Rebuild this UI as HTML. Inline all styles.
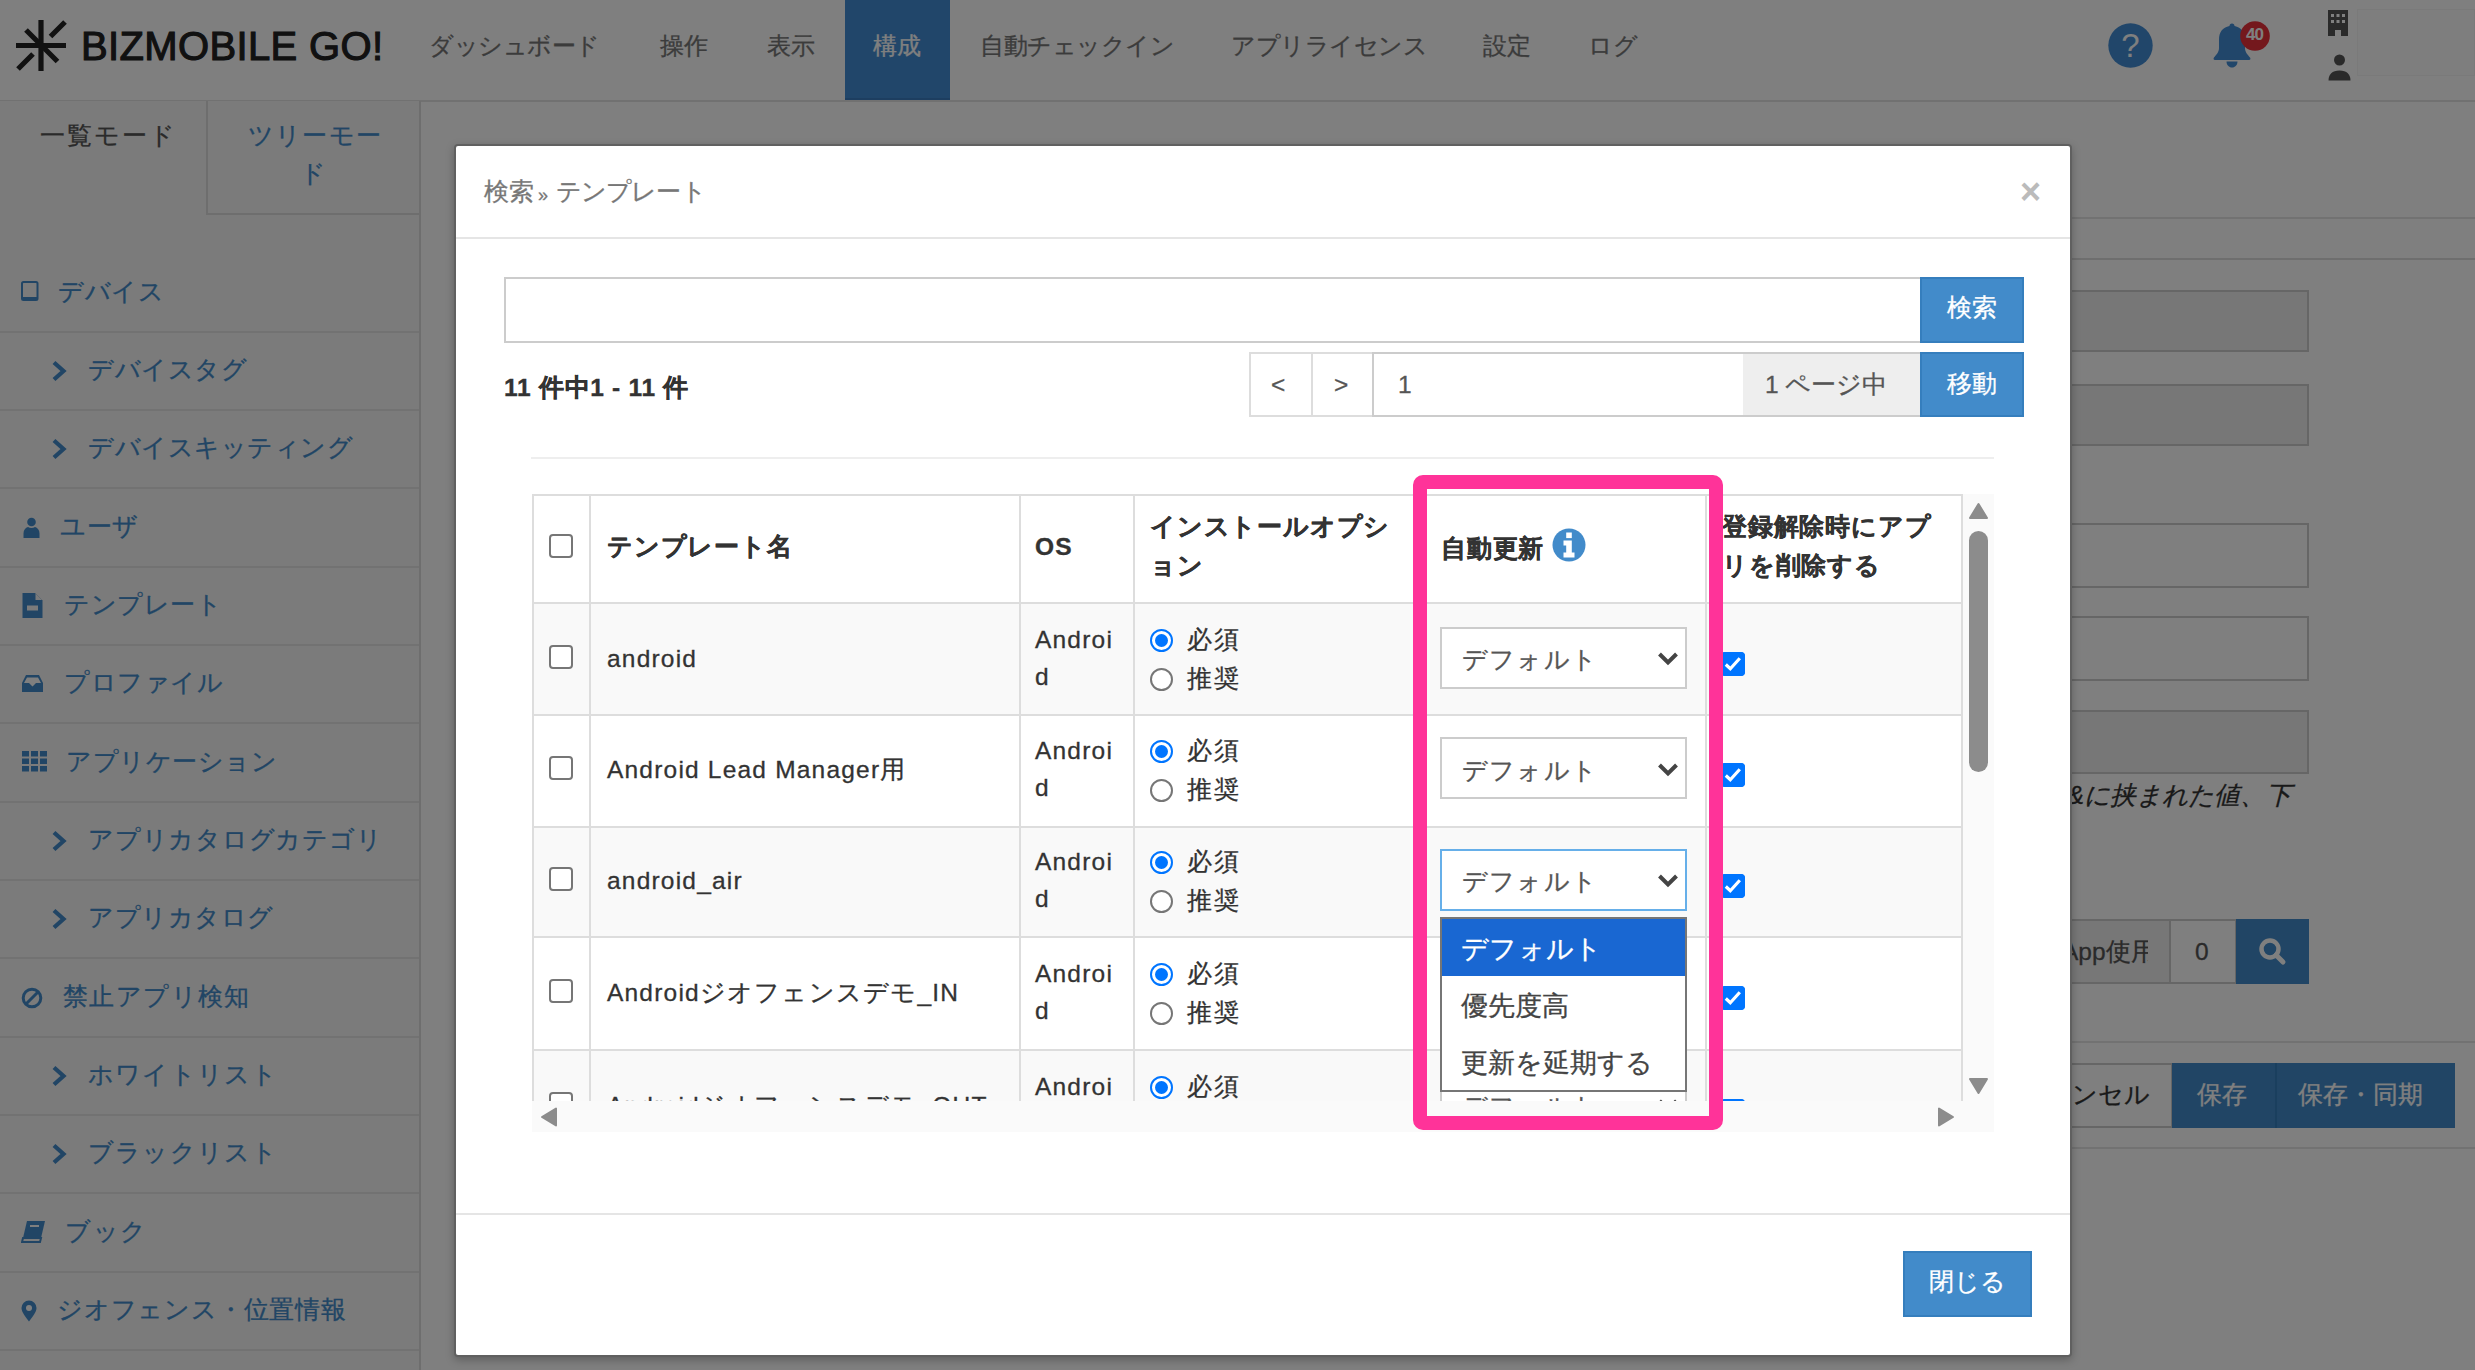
<!DOCTYPE html>
<html lang="ja"><head><meta charset="utf-8">
<style>
*{box-sizing:border-box;margin:0;padding:0}
html,body{width:2475px;height:1370px;overflow:hidden;background:#fff;font-family:"Liberation Sans",sans-serif;font-size:24.5px;color:#333}
.t,.st,.nt,.btn{-webkit-text-stroke:0.3px currentColor}
.a{position:absolute;white-space:nowrap}
.nt{position:absolute;top:27px;height:38px;line-height:38px;color:#777;font-size:23.5px}
.st{position:absolute;color:#428bca;line-height:38px;height:38px;font-size:24.5px;letter-spacing:0.5px}
.sep{position:absolute;left:0;width:419px;height:2px;background:#e4e4e4}
.hl{position:absolute;height:2px;background:#ddd}
.vl{position:absolute;width:2px;background:#ddd}
.t{position:absolute;white-space:nowrap;line-height:38px;height:38px;color:#333;font-size:24.5px}
.b{font-weight:bold;-webkit-text-stroke:0.35px #333;letter-spacing:0.8px}
.cb{position:absolute;width:24px;height:24px;border:2px solid #767676;border-radius:4px;background:#fff}
.cbc{position:absolute;width:24px;height:24px;border-radius:4px;background:#0075ff}
.rd{position:absolute;width:23px;height:23px;border-radius:50%;border:2px solid #767676;background:#fff}
.rdc{position:absolute;width:23px;height:23px;border-radius:50%;border:2px solid #0075ff;background:#fff}
.rdc:after{content:"";position:absolute;left:3px;top:3px;width:13px;height:13px;border-radius:50%;background:#0075ff}
.sel{position:absolute;width:247px;height:62px;border:2px solid #ccc;background:#fff}
.btn{position:absolute;background:#428bca;color:#fff;text-align:center;font-size:24.5px}
</style></head><body>

<div class="a" style="left:0;top:0;width:2475px;height:1370px;background:#fff">
<div class="a" style="left:0;top:100px;width:2475px;height:2px;background:#e3e3e3"></div>
<svg class="a" style="left:14px;top:18px" width="56" height="56" viewBox="0 0 56 56">
<g stroke="#222" stroke-width="5.2" fill="none">
<line x1="27" y1="2" x2="27" y2="53"/>
<line x1="2" y1="27.5" x2="52" y2="27.5"/>
<line x1="12" y1="12" x2="43.5" y2="43.5"/>
<line x1="36.5" y1="18.5" x2="51" y2="4"/>
<line x1="4" y1="51" x2="19" y2="36"/>
</g></svg>
<div class="a" style="left:81px;top:23px;font-size:40px;font-weight:normal;color:#222;line-height:46px;letter-spacing:0.35px;-webkit-text-stroke:1.1px #222">BIZMOBILE GO!</div>
<div class="a" style="left:845px;top:0;width:105px;height:100px;background:#428cd4;border-bottom:2px solid #3a7cc0"></div>
<div class="nt" style="left:429px;color:#777;letter-spacing:-0.5px">ダッシュボード</div>
<div class="nt" style="left:660px;color:#777;letter-spacing:0">操作</div>
<div class="nt" style="left:767px;color:#777;letter-spacing:0">表示</div>
<div class="nt" style="left:873px;color:#fff;letter-spacing:0">構成</div>
<div class="nt" style="left:980px;color:#777;letter-spacing:-0.5px">自動チェックイン</div>
<div class="nt" style="left:1231px;color:#777;letter-spacing:-0.5px">アプリライセンス</div>
<div class="nt" style="left:1483px;color:#777;letter-spacing:0">設定</div>
<div class="nt" style="left:1588px;color:#777;letter-spacing:0">ログ</div>
<svg class="a" style="left:2108px;top:23px" width="45" height="45" viewBox="0 0 45 45">
<circle cx="22.5" cy="22.5" r="22.2" fill="#428cd4"/>
<text x="22.5" y="34" text-anchor="middle" font-family="Liberation Sans" font-size="33" fill="#fff">?</text></svg>
<svg class="a" style="left:2210px;top:22px" width="44" height="46" viewBox="0 0 44 46">
<path d="M22 1.5c1.6 0 2.5 1 2.5 2.5c7 1.2 10.5 6.5 10.5 13.5v8.5c0 4 2.5 6.5 5 9.5c.8 1 .5 2.5-1 2.5H5c-1.5 0-1.8-1.5-1-2.5c2.5-3 5-5.5 5-9.5v-8.5c0-7 3.5-12.3 10.5-13.5c0-1.5.9-2.5 2.5-2.5z" fill="#428cd4"/>
<path d="M16.5 39.5h11c0 3.5-2.5 6-5.5 6s-5.5-2.5-5.5-6z" fill="#428cd4"/></svg>
<svg class="a" style="left:2238px;top:19px" width="34" height="34" viewBox="0 0 34 34">
<circle cx="17" cy="17" r="14.8" fill="#e8303a"/>
<text x="16.5" y="21" text-anchor="middle" font-family="Liberation Sans" font-size="17" font-weight="bold" fill="#fff" letter-spacing="-1">40</text></svg>
<svg class="a" style="left:2328px;top:10px" width="21" height="27" viewBox="0 0 21 27">
<path d="M0 0h20v26h-7v-6h-6v6H0z" fill="#555"/>
<g fill="#fff"><rect x="3" y="4" width="3" height="3"/><rect x="8.5" y="4" width="3" height="3"/><rect x="14" y="4" width="3" height="3"/>
<rect x="3" y="10" width="3" height="3"/><rect x="8.5" y="10" width="3" height="3"/><rect x="14" y="10" width="3" height="3"/></g></svg>
<svg class="a" style="left:2328px;top:54px" width="24" height="28" viewBox="0 0 24 28">
<circle cx="11.5" cy="6" r="5.5" fill="#555"/>
<path d="M0.5 26.5c0-6 3.5-10 11-10S22.5 20.5 22.5 26.5z" fill="#555"/></svg>
<div class="a" style="left:2357px;top:9px;width:118px;height:67px;background:#fdfdfd;border:1px solid #f5f5f5"></div>
<div class="a" style="left:0;top:101px;width:419px;height:1269px;background:#f6f6f6"></div>
<div class="a" style="left:419px;top:101px;width:2px;height:1269px;background:#ddd"></div>
<div class="a" style="left:206px;top:101px;width:2px;height:114px;background:#ddd"></div>
<div class="a" style="left:206px;top:213px;width:213px;height:2px;background:#ddd"></div>
<div class="t" style="left:40px;top:117px;color:#555;letter-spacing:2px">一覧モード</div>
<div class="t" style="left:248px;top:117px;color:#428bca;letter-spacing:1.2px">ツリーモー</div>
<div class="t" style="left:300px;top:155px;color:#428bca">ド</div>
<div class="sep" style="top:330.5px"></div>
<div class="st" style="left:58px;top:272.5px;letter-spacing:0.5px">デバイス</div>
<svg class="a" style="left:21px;top:281px" width="18" height="20" viewBox="0 0 18 20"><rect x="1" y="1" width="15.5" height="18" rx="1.5" fill="none" stroke="#428bca" stroke-width="2"/><rect x="1" y="16" width="15.5" height="3" fill="#428bca"/></svg>
<div class="sep" style="top:408.8px"></div>
<div class="st" style="left:88px;top:350.8px;letter-spacing:0.5px">デバイスタグ</div>
<svg class="a" style="left:51px;top:360px" width="16" height="22" viewBox="0 0 16 22"><path d="M3 2.5l9.5 8.5l-9.5 8.5" fill="none" stroke="#428bca" stroke-width="4.2" stroke-linejoin="miter"/></svg>
<div class="sep" style="top:487.2px"></div>
<div class="st" style="left:88px;top:429.2px;letter-spacing:0.5px">デバイスキッティング</div>
<svg class="a" style="left:51px;top:438px" width="16" height="22" viewBox="0 0 16 22"><path d="M3 2.5l9.5 8.5l-9.5 8.5" fill="none" stroke="#428bca" stroke-width="4.2" stroke-linejoin="miter"/></svg>
<div class="sep" style="top:565.5px"></div>
<div class="st" style="left:60px;top:507.5px;letter-spacing:0.5px">ユーザ</div>
<svg class="a" style="left:22px;top:517px" width="19" height="22" viewBox="0 0 19 22"><circle cx="9.5" cy="5" r="4.3" fill="#428bca"/><path d="M1.5 21v-4.5c0-3.5 2-6 4.5-6.5c2 1.3 5 1.3 7 0c2.5.5 4.5 3 4.5 6.5V21z" fill="#428bca"/></svg>
<div class="sep" style="top:643.8px"></div>
<div class="st" style="left:64px;top:585.8px;letter-spacing:0.5px">テンプレート</div>
<svg class="a" style="left:22px;top:592px" width="21" height="27" viewBox="0 0 21 27"><path d="M0.5 1h12.5l7.5 7.5V26h-20z" fill="#428bca"/><path d="M13.5 1.5v6.5h6.5z" fill="#f6f6f6"/><rect x="5" y="13.5" width="11" height="5" fill="#f6f6f6"/></svg>
<div class="sep" style="top:722.1px"></div>
<div class="st" style="left:64px;top:664.1px;letter-spacing:0.5px">プロファイル</div>
<svg class="a" style="left:22px;top:674px" width="21" height="19" viewBox="0 0 21 19"><path d="M4 1h13l4 8v9H0V9z" fill="#428bca"/><path d="M5 3.5h11l3 5.5h-5l-3.5 3.5L7 9H2z" fill="#fff"/></svg>
<div class="sep" style="top:800.5px"></div>
<div class="st" style="left:66px;top:742.5px;letter-spacing:0.5px">アプリケーション</div>
<svg class="a" style="left:22px;top:751px" width="26" height="21" viewBox="0 0 26 21"><g fill="#428bca"><rect x="0" y="0" width="7" height="5.5"/><rect x="9" y="0" width="7" height="5.5"/><rect x="18" y="0" width="7" height="5.5"/><rect x="0" y="7.5" width="7" height="5.5"/><rect x="9" y="7.5" width="7" height="5.5"/><rect x="18" y="7.5" width="7" height="5.5"/><rect x="0" y="15" width="7" height="5.5"/><rect x="9" y="15" width="7" height="5.5"/><rect x="18" y="15" width="7" height="5.5"/></g></svg>
<div class="sep" style="top:878.8px"></div>
<div class="st" style="left:88px;top:820.8px;letter-spacing:0.75px">アプリカタログカテゴリ</div>
<svg class="a" style="left:51px;top:830px" width="16" height="22" viewBox="0 0 16 22"><path d="M3 2.5l9.5 8.5l-9.5 8.5" fill="none" stroke="#428bca" stroke-width="4.2" stroke-linejoin="miter"/></svg>
<div class="sep" style="top:957.1px"></div>
<div class="st" style="left:88px;top:899.1px;letter-spacing:0.5px">アプリカタログ</div>
<svg class="a" style="left:51px;top:908px" width="16" height="22" viewBox="0 0 16 22"><path d="M3 2.5l9.5 8.5l-9.5 8.5" fill="none" stroke="#428bca" stroke-width="4.2" stroke-linejoin="miter"/></svg>
<div class="sep" style="top:1035.5px"></div>
<div class="st" style="left:63px;top:977.5px;letter-spacing:1.4px">禁止アプリ検知</div>
<svg class="a" style="left:21px;top:987px" width="22" height="22" viewBox="0 0 22 22"><circle cx="11" cy="11" r="8.8" fill="none" stroke="#428bca" stroke-width="3"/><line x1="5" y1="17" x2="17" y2="5" stroke="#428bca" stroke-width="3"/></svg>
<div class="sep" style="top:1113.8px"></div>
<div class="st" style="left:88px;top:1055.8px;letter-spacing:1.2px">ホワイトリスト</div>
<svg class="a" style="left:51px;top:1065px" width="16" height="22" viewBox="0 0 16 22"><path d="M3 2.5l9.5 8.5l-9.5 8.5" fill="none" stroke="#428bca" stroke-width="4.2" stroke-linejoin="miter"/></svg>
<div class="sep" style="top:1192.1px"></div>
<div class="st" style="left:88px;top:1134.1px;letter-spacing:1.2px">ブラックリスト</div>
<svg class="a" style="left:51px;top:1143px" width="16" height="22" viewBox="0 0 16 22"><path d="M3 2.5l9.5 8.5l-9.5 8.5" fill="none" stroke="#428bca" stroke-width="4.2" stroke-linejoin="miter"/></svg>
<div class="sep" style="top:1270.5px"></div>
<div class="st" style="left:65px;top:1212.5px;letter-spacing:1.7px">ブック</div>
<svg class="a" style="left:21px;top:1220px" width="25" height="24" viewBox="0 0 25 24"><path d="M6 1h18l-4 17H2z" fill="#428bca"/><path d="M2 18h18l-1 4H1z" fill="none" stroke="#428bca" stroke-width="2"/><rect x="9" y="5" width="9" height="2" fill="#fff"/></svg>
<div class="sep" style="top:1348.8px"></div>
<div class="st" style="left:57px;top:1290.8px;letter-spacing:0.8px">ジオフェンス・位置情報</div>
<svg class="a" style="left:21px;top:1300px" width="16" height="22" viewBox="0 0 16 22"><path d="M8 0.5a7.5 7.5 0 0 1 7.5 7.5c0 4-4 9-7.5 13.5C4.5 17 0.5 12 0.5 8A7.5 7.5 0 0 1 8 0.5z" fill="#428bca"/><circle cx="8" cy="8" r="3" fill="#fff"/></svg>
<div class="a" style="left:2070px;top:217px;width:405px;height:2px;background:#e5e5e5"></div>
<div class="a" style="left:2070px;top:258px;width:405px;height:2px;background:#ddd"></div>
<div class="a" style="left:2000px;top:290px;width:309px;height:62px;background:#eee;border:2px solid #ccc"></div>
<div class="a" style="left:2000px;top:384px;width:309px;height:62px;background:#eee;border:2px solid #ccc"></div>
<div class="a" style="left:2000px;top:523px;width:309px;height:65px;background:#fff;border:2px solid #ccc"></div>
<div class="a" style="left:2000px;top:616px;width:309px;height:65px;background:#fff;border:2px solid #ccc"></div>
<div class="a" style="left:2000px;top:710px;width:309px;height:64px;background:#eee;border:2px solid #ccc"></div>
<div class="t" style="left:2067px;top:776px;font-style:italic;color:#333;font-size:25.5px">&amp;に挟まれた値、下</div>
<div class="a" style="left:2000px;top:919px;width:171px;height:65px;background:#eee;border:2px solid #ccc"></div>
<div class="a" style="left:2000px;top:933px;width:148px;height:38px;overflow:hidden"><div class="t" style="left:62px;top:0;color:#555">App使用</div></div>
<div class="a" style="left:2169px;top:919px;width:68px;height:65px;background:#fff;border:2px solid #ccc"></div>
<div class="t" style="left:2195px;top:933px;color:#555">0</div>
<div class="a" style="left:2236px;top:919px;width:73px;height:65px;background:#428bca"></div>
<svg class="a" style="left:2258px;top:937px" width="30" height="30" viewBox="0 0 30 30"><circle cx="12" cy="12" r="8.5" fill="none" stroke="#fff" stroke-width="4.5"/><line x1="18" y1="18" x2="25" y2="25" stroke="#fff" stroke-width="5" stroke-linecap="round"/></svg>
<div class="a" style="left:2070px;top:1041px;width:405px;height:2px;background:#e5e5e5"></div>
<div class="a" style="left:2000px;top:1063px;width:173px;height:65px;background:#fff;border:2px solid #ccc"></div>
<div class="t" style="left:2020px;top:1076px;color:#333">キャンセル</div>
<div class="a" style="left:2172px;top:1063px;width:104px;height:65px;background:#428bca"></div>
<div class="a" style="left:2275px;top:1063px;width:2px;height:65px;background:#357ebd"></div>
<div class="a" style="left:2277px;top:1063px;width:178px;height:65px;background:#428bca"></div>
<div class="t" style="left:2197px;top:1076px;color:#fff">保存</div>
<div class="t" style="left:2298px;top:1076px;color:#fff">保存・同期</div>
<div class="a" style="left:2070px;top:1147px;width:405px;height:2px;background:#e5e5e5"></div>
</div>
<div class="a" style="left:0;top:0;width:2475px;height:1370px;background:rgba(0,0,0,.5)"></div>
<div class="a" style="left:454px;top:144px;width:1618px;height:1213px;background:#fff;border:2px solid #606060;border-radius:4px;box-shadow:0 3px 8px rgba(0,0,0,.25)"></div>
<div class="t" style="left:484px;top:173px;color:#777">検索</div>
<div class="t" style="left:538px;top:176px;color:#777;font-size:18px">»</div>
<div class="t" style="left:556px;top:173px;color:#777;letter-spacing:-0.9px">テンプレート</div>
<div class="a" style="left:2020px;top:174px;font-size:36px;line-height:36px;font-weight:bold;color:#bbb">×</div>
<div class="hl" style="left:456px;top:237px;width:1614px;background:#e5e5e5"></div>
<div class="a" style="left:504px;top:277px;width:1418px;height:66px;border:2px solid #ccc;background:#fff"></div>
<div class="btn" style="left:1920px;top:277px;width:104px;height:66px;line-height:58px;border:2px solid #357ebd">検索</div>
<div class="t b" style="left:504px;top:369px;letter-spacing:0.7px">11 件中1 - 11 件</div>
<div class="a" style="left:1249px;top:352px;width:64px;height:65px;border:2px solid #ddd;background:#fff"></div>
<div class="a" style="left:1311px;top:352px;width:63px;height:65px;border:2px solid #ddd;background:#fff"></div>
<div class="t" style="left:1271px;top:366px;color:#555">&lt;</div>
<div class="t" style="left:1334px;top:366px;color:#555">&gt;</div>
<div class="a" style="left:1372px;top:352px;width:373px;height:65px;border:2px solid #ccc;background:#fff"></div>
<div class="t" style="left:1398px;top:366px;color:#555">1</div>
<div class="a" style="left:1743px;top:352px;width:179px;height:65px;border:2px solid #ccc;border-left:none;background:#eee"></div>
<div class="t" style="left:1765px;top:366px;color:#555">1 ページ中</div>
<div class="btn" style="left:1920px;top:352px;width:104px;height:65px;line-height:59px;border:2px solid #357ebd">移動</div>
<div class="hl" style="left:531px;top:457px;width:1463px;background:#eee"></div>
<div class="a" style="left:530px;top:492px;width:1464px;height:640px;overflow:hidden">
<div class="a" style="left:2px;top:2px;width:1462px;height:638px;background:#fff"></div>
<div class="a" style="left:2px;top:110px;width:1431px;height:112px;background:#f9f9f9"></div>
<div class="a" style="left:2px;top:334px;width:1431px;height:110px;background:#f9f9f9"></div>
<div class="a" style="left:2px;top:557px;width:1431px;height:112px;background:#f9f9f9"></div>
<div class="hl" style="left:2px;top:2px;width:1431px"></div>
<div class="hl" style="left:2px;top:110px;width:1431px"></div>
<div class="hl" style="left:2px;top:222px;width:1431px"></div>
<div class="hl" style="left:2px;top:334px;width:1431px"></div>
<div class="hl" style="left:2px;top:444px;width:1431px"></div>
<div class="hl" style="left:2px;top:557px;width:1431px"></div>
<div class="hl" style="left:2px;top:669px;width:1431px"></div>
<div class="vl" style="left:2px;top:2px;height:667px"></div>
<div class="vl" style="left:59px;top:2px;height:667px"></div>
<div class="vl" style="left:489px;top:2px;height:667px"></div>
<div class="vl" style="left:603px;top:2px;height:667px"></div>
<div class="vl" style="left:895px;top:2px;height:667px"></div>
<div class="vl" style="left:1175px;top:2px;height:667px"></div>
<div class="vl" style="left:1431px;top:2px;height:667px"></div>
<div class="cb" style="left:18.5px;top:42px"></div>
<div class="t b" style="left:77px;top:36px">テンプレート名</div>
<div class="t b" style="left:505px;top:36px;letter-spacing:1.2px">OS</div>
<div class="t b" style="left:620px;top:16px">インストールオプシ</div>
<div class="t b" style="left:620px;top:55px">ョン</div>
<div class="t b" style="left:911px;top:38px">自動更新</div>
<svg class="a" style="left:1022px;top:36px" width="34" height="34" viewBox="0 0 34 34"><circle cx="17" cy="17" r="16.5" fill="#428bca"/>
<g fill="#fff"><rect x="14.2" y="4.5" width="5.6" height="5.6"/><path d="M11.5 12.5h8.3v12h2.7v5h-11v-5h2.7v-7h-2.7z"/></g></svg>
<div class="t b" style="left:1192px;top:16px">登録解除時にアプ</div>
<div class="t b" style="left:1192px;top:55px">リを削除する</div>
<div class="cb" style="left:18.5px;top:153px"></div>
<div class="t" style="left:77px;top:148px;letter-spacing:1.2px">android</div>
<div class="t" style="left:505px;top:129px;letter-spacing:1.2px">Androi</div>
<div class="t" style="left:505px;top:166px">d</div>
<div class="rdc" style="left:619.5px;top:136.5px"></div>
<div class="rd" style="left:619.5px;top:175.5px"></div>
<div class="t" style="left:657px;top:129px;letter-spacing:2px">必須</div>
<div class="t" style="left:657px;top:168px;letter-spacing:2px">推奨</div>
<div class="sel" style="left:910px;top:135px;border-color:#ccc"></div>
<div class="t" style="left:932px;top:149px;color:#555;letter-spacing:1.2px">デフォルト</div>
<svg class="a" style="left:1127px;top:159px" width="22" height="16" viewBox="0 0 22 16"><path d="M2.5 3l8.5 8.5l8.5-8.5" fill="none" stroke="#444" stroke-width="4"/></svg>
<svg class="cbc" style="left:1190.5px;top:160px" width="24" height="24" viewBox="0 0 24 24"><rect width="24" height="24" rx="4" fill="#0075ff"/><path d="M4.8 12.5l4.5 4.2l9.5-10.5" fill="none" stroke="#fff" stroke-width="3.2"/></svg>
<div class="cb" style="left:18.5px;top:264px"></div>
<div class="t" style="left:77px;top:259px;letter-spacing:1.2px">Android Lead Manager用</div>
<div class="t" style="left:505px;top:240px;letter-spacing:1.2px">Androi</div>
<div class="t" style="left:505px;top:277px">d</div>
<div class="rdc" style="left:619.5px;top:247.5px"></div>
<div class="rd" style="left:619.5px;top:286.5px"></div>
<div class="t" style="left:657px;top:240px;letter-spacing:2px">必須</div>
<div class="t" style="left:657px;top:279px;letter-spacing:2px">推奨</div>
<div class="sel" style="left:910px;top:245px;border-color:#ccc"></div>
<div class="t" style="left:932px;top:260px;color:#555;letter-spacing:1.2px">デフォルト</div>
<svg class="a" style="left:1127px;top:270px" width="22" height="16" viewBox="0 0 22 16"><path d="M2.5 3l8.5 8.5l8.5-8.5" fill="none" stroke="#444" stroke-width="4"/></svg>
<svg class="cbc" style="left:1190.5px;top:271px" width="24" height="24" viewBox="0 0 24 24"><rect width="24" height="24" rx="4" fill="#0075ff"/><path d="M4.8 12.5l4.5 4.2l9.5-10.5" fill="none" stroke="#fff" stroke-width="3.2"/></svg>
<div class="cb" style="left:18.5px;top:375px"></div>
<div class="t" style="left:77px;top:370px;letter-spacing:1.2px">android_air</div>
<div class="t" style="left:505px;top:351px;letter-spacing:1.2px">Androi</div>
<div class="t" style="left:505px;top:388px">d</div>
<div class="rdc" style="left:619.5px;top:358.5px"></div>
<div class="rd" style="left:619.5px;top:397.5px"></div>
<div class="t" style="left:657px;top:351px;letter-spacing:2px">必須</div>
<div class="t" style="left:657px;top:390px;letter-spacing:2px">推奨</div>
<div class="sel" style="left:910px;top:357px;border-color:#66afe9"></div>
<div class="t" style="left:932px;top:371px;color:#555;letter-spacing:1.2px">デフォルト</div>
<svg class="a" style="left:1127px;top:381px" width="22" height="16" viewBox="0 0 22 16"><path d="M2.5 3l8.5 8.5l8.5-8.5" fill="none" stroke="#444" stroke-width="4"/></svg>
<svg class="cbc" style="left:1190.5px;top:382px" width="24" height="24" viewBox="0 0 24 24"><rect width="24" height="24" rx="4" fill="#0075ff"/><path d="M4.8 12.5l4.5 4.2l9.5-10.5" fill="none" stroke="#fff" stroke-width="3.2"/></svg>
<div class="cb" style="left:18.5px;top:487px"></div>
<div class="t" style="left:77px;top:482px;letter-spacing:1.2px">Androidジオフェンスデモ_IN</div>
<div class="t" style="left:505px;top:463px;letter-spacing:1.2px">Androi</div>
<div class="t" style="left:505px;top:500px">d</div>
<div class="rdc" style="left:619.5px;top:470.5px"></div>
<div class="rd" style="left:619.5px;top:509.5px"></div>
<div class="t" style="left:657px;top:463px;letter-spacing:2px">必須</div>
<div class="t" style="left:657px;top:502px;letter-spacing:2px">推奨</div>
<div class="sel" style="left:910px;top:469px;border-color:#ccc"></div>
<div class="t" style="left:932px;top:483px;color:#555;letter-spacing:1.2px">デフォルト</div>
<svg class="a" style="left:1127px;top:493px" width="22" height="16" viewBox="0 0 22 16"><path d="M2.5 3l8.5 8.5l8.5-8.5" fill="none" stroke="#444" stroke-width="4"/></svg>
<svg class="cbc" style="left:1190.5px;top:494px" width="24" height="24" viewBox="0 0 24 24"><rect width="24" height="24" rx="4" fill="#0075ff"/><path d="M4.8 12.5l4.5 4.2l9.5-10.5" fill="none" stroke="#fff" stroke-width="3.2"/></svg>
<div class="cb" style="left:18.5px;top:600px"></div>
<div class="t" style="left:77px;top:595px;letter-spacing:1.2px">Androidジオフェンスデモ_OUT</div>
<div class="t" style="left:505px;top:576px;letter-spacing:1.2px">Androi</div>
<div class="t" style="left:505px;top:613px">d</div>
<div class="rdc" style="left:619.5px;top:583.5px"></div>
<div class="rd" style="left:619.5px;top:622.5px"></div>
<div class="t" style="left:657px;top:576px;letter-spacing:2px">必須</div>
<div class="t" style="left:657px;top:615px;letter-spacing:2px">推奨</div>
<div class="sel" style="left:910px;top:582px;border-color:#ccc"></div>
<div class="t" style="left:932px;top:596px;color:#555;letter-spacing:1.2px">デフォルト</div>
<svg class="a" style="left:1127px;top:606px" width="22" height="16" viewBox="0 0 22 16"><path d="M2.5 3l8.5 8.5l8.5-8.5" fill="none" stroke="#444" stroke-width="4"/></svg>
<svg class="cbc" style="left:1190.5px;top:607px" width="24" height="24" viewBox="0 0 24 24"><rect width="24" height="24" rx="4" fill="#0075ff"/><path d="M4.8 12.5l4.5 4.2l9.5-10.5" fill="none" stroke="#fff" stroke-width="3.2"/></svg>
<div class="a" style="left:1433px;top:2px;width:31px;height:607px;background:#fafafa"></div>
<div class="a" style="left:2px;top:609px;width:1462px;height:31px;background:#fafafa"></div>
<svg class="a" style="left:1438px;top:10px" width="21" height="18" viewBox="0 0 21 18"><path d="M10.5 2L19 16H2z" fill="#8c8c8c" stroke="#8c8c8c" stroke-width="2" stroke-linejoin="round"/></svg>
<div class="a" style="left:1439px;top:39px;width:19px;height:241px;border-radius:9.5px;background:#8c8c8c"></div>
<svg class="a" style="left:1438px;top:585px" width="21" height="18" viewBox="0 0 21 18"><path d="M10.5 16L19 2H2z" fill="#8c8c8c" stroke="#8c8c8c" stroke-width="2" stroke-linejoin="round"/></svg>
<svg class="a" style="left:10px;top:614px" width="18" height="22" viewBox="0 0 18 22"><path d="M2 11L16 2.5v17z" fill="#8c8c8c" stroke="#8c8c8c" stroke-width="2" stroke-linejoin="round"/></svg>
<svg class="a" style="left:1407px;top:614px" width="18" height="22" viewBox="0 0 18 22"><path d="M16 11L2 2.5v17z" fill="#8c8c8c" stroke="#8c8c8c" stroke-width="2" stroke-linejoin="round"/></svg>
</div>
<div class="a" style="left:1440px;top:917px;width:247px;height:175px;background:#fff;border:2px solid #767676"></div>
<div class="a" style="left:1442px;top:919px;width:243px;height:57px;background:#1967d2"></div>
<div class="t" style="left:1461px;top:930px;color:#fff;font-size:27px;letter-spacing:0.3px">デフォルト</div>
<div class="t" style="left:1461px;top:987px;color:#444;font-size:27px">優先度高</div>
<div class="t" style="left:1461px;top:1044px;color:#444;font-size:27px">更新を延期する</div>
<div class="hl" style="left:456px;top:1213px;width:1614px;background:#e5e5e5"></div>
<div class="btn" style="left:1903px;top:1251px;width:129px;height:66px;line-height:58px;border:2px solid #357ebd">閉じる</div>
<div class="a" style="left:1412.5px;top:475px;width:310px;height:654.5px;border:14px solid #ff3399;border-radius:10px"></div>
</body></html>
